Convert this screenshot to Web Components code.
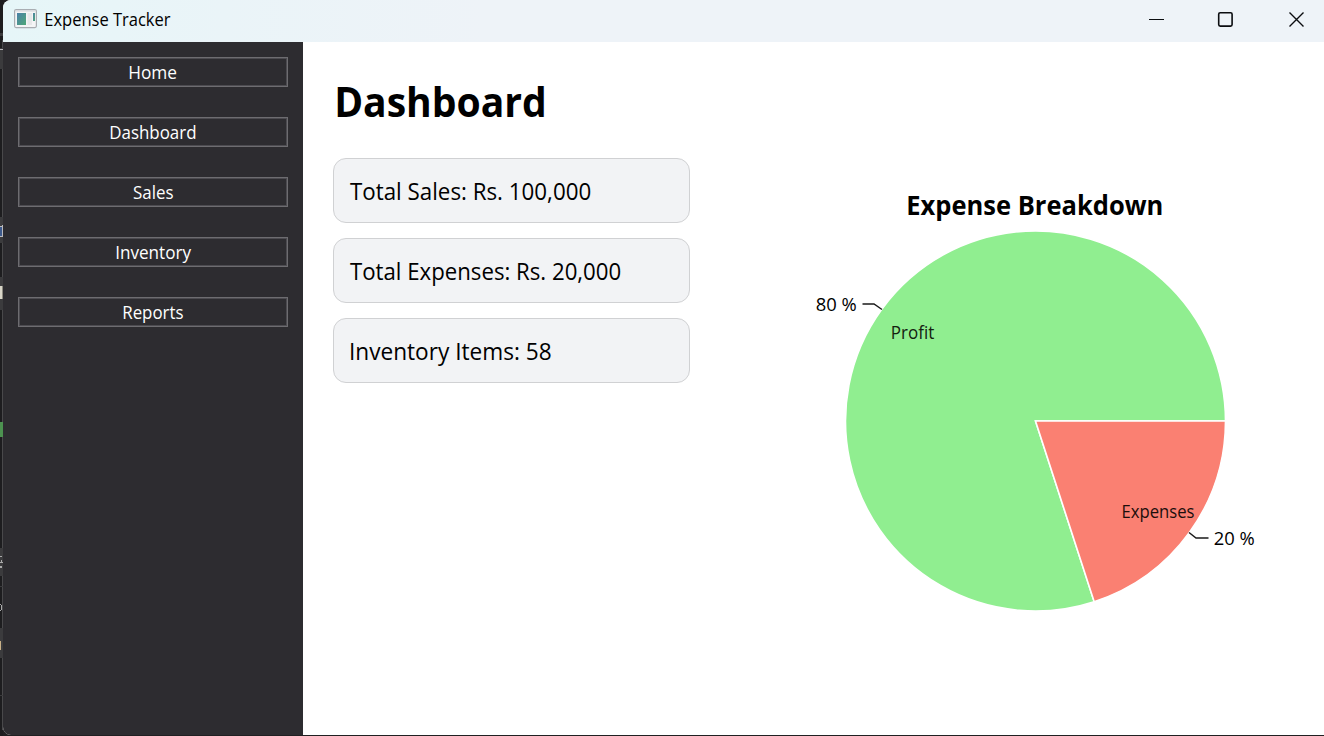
<!DOCTYPE html>
<html lang="en">
<head>
<meta charset="utf-8">
<title>Expense Tracker</title>
<style>
  html, body { margin: 0; height: 100%; overflow: hidden; background: #1f1f21; }
  body { font-family: "Open Sans", "Noto Sans", sans-serif; color: #000; }
</style>
</head>
<body>
<desktop-edge>
  <app-window>
    <title-bar slot="title"><fit-text w="125" size="17.6" base="26" h="42" label="Expense Tracker"></fit-text></title-bar>
    <side-nav slot="nav">
      <nav-button><fit-text w="47.5" size="17.6" base="20" h="26" label="Home"></fit-text></nav-button>
      <nav-button><fit-text w="86" size="17.6" base="20" h="26" label="Dashboard"></fit-text></nav-button>
      <nav-button><fit-text w="40" size="17.6" base="20" h="26" label="Sales"></fit-text></nav-button>
      <nav-button><fit-text w="74.5" size="17.6" base="20" h="26" label="Inventory"></fit-text></nav-button>
      <nav-button><fit-text w="60" size="17.6" base="20" h="26" label="Reports"></fit-text></nav-button>
    </side-nav>
    <dashboard-view>
      <fit-text slot="heading" w="209.5" size="41" weight="700" base="45" h="56" label="Dashboard"></fit-text>
      <stat-card><fit-text w="240.5" size="23.5" base="41" h="63" label="Total Sales: Rs. 100,000"></fit-text></stat-card>
      <stat-card><fit-text w="270.5" size="23.5" base="41" h="63" label="Total Expenses: Rs. 20,000"></fit-text></stat-card>
      <stat-card><fit-text w="201" size="23.5" base="41" h="63" label="Inventory Items: 58"></fit-text></stat-card>
      <pie-chart slot="chart"></pie-chart>
    </dashboard-view>
  </app-window>
</desktop-edge>

<script>
const define = (name, html, ready) => customElements.define(name, class extends HTMLElement {
  constructor() {
    super();
    this.attachShadow({ mode: 'open' }).innerHTML = html;
  }
  connectedCallback() { if (ready) ready(this); }
});

/* A single line of text set to a given width, with its baseline at a given height. */
define('fit-text', `
  <style>
    :host { display: block; flex: none; }
    svg { display: block; overflow: visible; }
    text { fill: currentColor; }
  </style>
  <svg><text lengthAdjust="spacingAndGlyphs"></text></svg>`, el => {
  const a = n => el.getAttribute(n);
  const svg = el.shadowRoot.querySelector('svg');
  const text = svg.querySelector('text');
  const size = +a('size'), w = +a('w');
  const narrow = 'TS'.includes(a('label')[0]);
  svg.setAttribute('width', w);
  svg.setAttribute('height', a('h'));
  text.setAttribute('x', narrow ? 0 : -size * 0.045);
  text.setAttribute('y', a('base'));
  text.setAttribute('font-size', size);
  text.setAttribute('font-weight', a('weight') || 400);
  text.setAttribute('textLength', w + size * (narrow ? 0.03 : 0.075));
  text.textContent = a('label');
});

/* The strip of desktop that shows on the left and bottom of the window. */
define('desktop-edge', `
  <style>
    :host { display: grid; grid-template-columns: 3px 1fr; width: 1324px; height: 736px; background: #202022; overflow: hidden; }
    svg { display: block; }
  </style>
  <svg width="3" height="736" shape-rendering="crispEdges">
    <path fill="#1d1d1f" d="M0 0h3v736H0z"/>
    <path fill="#49494b" d="M2 40h1v690H2z"/>
    <path fill="#3b3b3d" d="M0 33h3v3H0zM0 48h3v21H0zM0 217h3v26H0zM0 277h3v33H0zM0 548h3v28H0zM0 628h3v30H0zM0 586h3v1H0zM0 695h3v1H0z"/>
    <path fill="#b9b9bd" d="M0 49h3v1H0zM0 226h3v1H0zM2 225h1v12H2zM0 236h3v1H0z"/>
    <path fill="#3d5a8c" d="M0 227h2v9H0z"/>
    <path fill="#d8d5c8" d="M0 286h2v13H0z"/>
    <path fill="#8c8a80" d="M2 286h1v13H2z"/>
    <path fill="#4c9250" d="M0 422h3v15H0z"/>
    <path fill="#aaa" d="M0 556h2v1H0zM1 560h1v2H1zM0 562h3v1H0zM0 566h2v2H0zM0 604h1v1H0zM1 605h1v5H1zM0 610h1v1H0z"/>
    <path fill="#c8b088" d="M0 641h1v9H0z"/>
  </svg>
  <slot></slot>`);

define('app-window', `
  <style>
    :host { display: grid; grid-template: 42px 693px / 300px 1fr; height: 735px; background: #fff; border-radius: 8px 0 0 8px; overflow: hidden; }
    header { grid-column: 1 / 3; }
  </style>
  <header><slot name="title"></slot></header>
  <slot name="nav"></slot>
  <slot></slot>`);

define('title-bar', `
  <style>
    :host { display: flex; height: 42px; padding-left: 11px; background: linear-gradient(90deg, #e6f6f8 0, #eaf4f8 220px, #eef3f8 480px, #eef3f8 100%); }
    .icon { margin-right: 7.5px; flex: none; }
    .controls { margin-left: auto; flex: none; }
    svg { display: block; }
  </style>
  <svg class="icon" width="23" height="42" viewBox="0 0 23 42">
    <defs><linearGradient id="g" x1="0" y1="0" x2="1" y2="1"><stop offset="0" stop-color="#4a80a8"/><stop offset="1" stop-color="#4fa878"/></linearGradient></defs>
    <rect x=".6" y="9.6" width="21.8" height="18" rx="1.5" fill="#f4f5f6" stroke="#a9adb2" stroke-width="1.2"/>
    <path d="M1.5 11h20" stroke="#d3d6da"/>
    <rect x="3" y="13" width="9" height="12" fill="url(#g)"/>
    <rect x="13.5" y="13" width="4.5" height="12" fill="#e7e8ea"/>
    <rect x="19" y="13" width="2" height="8" fill="url(#g)"/>
  </svg>
  <slot></slot>
  <svg class="controls" width="176" height="42" viewBox="0 0 176 42" fill="none" stroke="#0b0d10" stroke-width="1.4">
    <path d="M1 19.5h15" stroke-width="1"/>
    <rect x="70.7" y="12.7" width="13.4" height="13.4" rx="1.5" stroke-width="1.6"/>
    <path d="M141.5 12.5l14 14m0-14l-14 14"/>
  </svg>`);

define('side-nav', `
  <style>
    :host { display: flex; flex-direction: column; gap: 30px; box-sizing: border-box; padding: 15px; background: #2d2c30; color: #fff; }
  </style>
  <slot></slot>`);

define('nav-button', `
  <style>
    :host { display: block; }
    button { display: flex; justify-content: center; width: 100%; height: 30px; box-sizing: border-box; margin: 0; padding: 1px; background: none; border: 1px solid #6d6c70; box-shadow: inset 0 0 0 1px #4c4b50; outline: 0; color: inherit; font: inherit; }
  </style>
  <button><slot></slot></button>`);

define('dashboard-view', `
  <style>
    :host { display: grid; grid-template-columns: 357px 1fr; column-gap: 110px; padding: 30px 24px 0 30px; min-width: 0; }
    h1 { margin: 0 0 30px 3px; height: 56px; font-weight: 700; }
    .cards { display: flex; flex-direction: column; gap: 15px; }
    .chart { padding-top: 108px; }
  </style>
  <section>
    <h1><slot name="heading"></slot></h1>
    <div class="cards"><slot></slot></div>
  </section>
  <div class="chart"><slot name="chart"></slot></div>`);

define('stat-card', `
  <style>
    :host { display: block; box-sizing: border-box; height: 65px; padding-left: 16px; background: #f2f3f5; border: 1px solid #d0d1d3; border-radius: 13px; }
  </style>
  <slot></slot>`);

define('pie-chart', `
  <style>
    :host { display: block; }
    svg { display: block; }
    text { font-size: 17.6px; fill: #000; }
    .title { font-size: 26.4px; font-weight: 700; }
    .slice { stroke: #fff; stroke-width: 1.6; }
    .leader { fill: none; stroke: #1a1a1a; stroke-width: 1.5; }
    .name { fill: #14200f; }
    .on-red { fill: #1c0e0c; }
  </style>
  <svg width="500" height="450" viewBox="800 180 500 450">
    <text class="title" x="906.3" y="215" textLength="257" lengthAdjust="spacingAndGlyphs">Expense Breakdown</text>
    <path class="slice" fill="#90ee90" d="M1035.5 421L1094.2 601.7A190 190 0 1 1 1225.5 421Z"/>
    <path class="slice" fill="#fa8072" d="M1035.5 421H1225.5A190 190 0 0 1 1094.2 601.7Z"/>
    <path class="leader" d="M862.5 304H874L882 309.5M1189 532.5L1196 538H1208.5"/>
    <text x="815.7" y="311" textLength="41" lengthAdjust="spacingAndGlyphs">80 %</text>
    <text x="1213.7" y="545" textLength="41" lengthAdjust="spacingAndGlyphs">20 %</text>
    <text class="name" x="890.8" y="339" textLength="43.5" lengthAdjust="spacingAndGlyphs">Profit</text>
    <text class="name on-red" x="1121.5" y="518" textLength="73" lengthAdjust="spacingAndGlyphs">Expenses</text>
  </svg>`);
</script>
</body>
</html>
